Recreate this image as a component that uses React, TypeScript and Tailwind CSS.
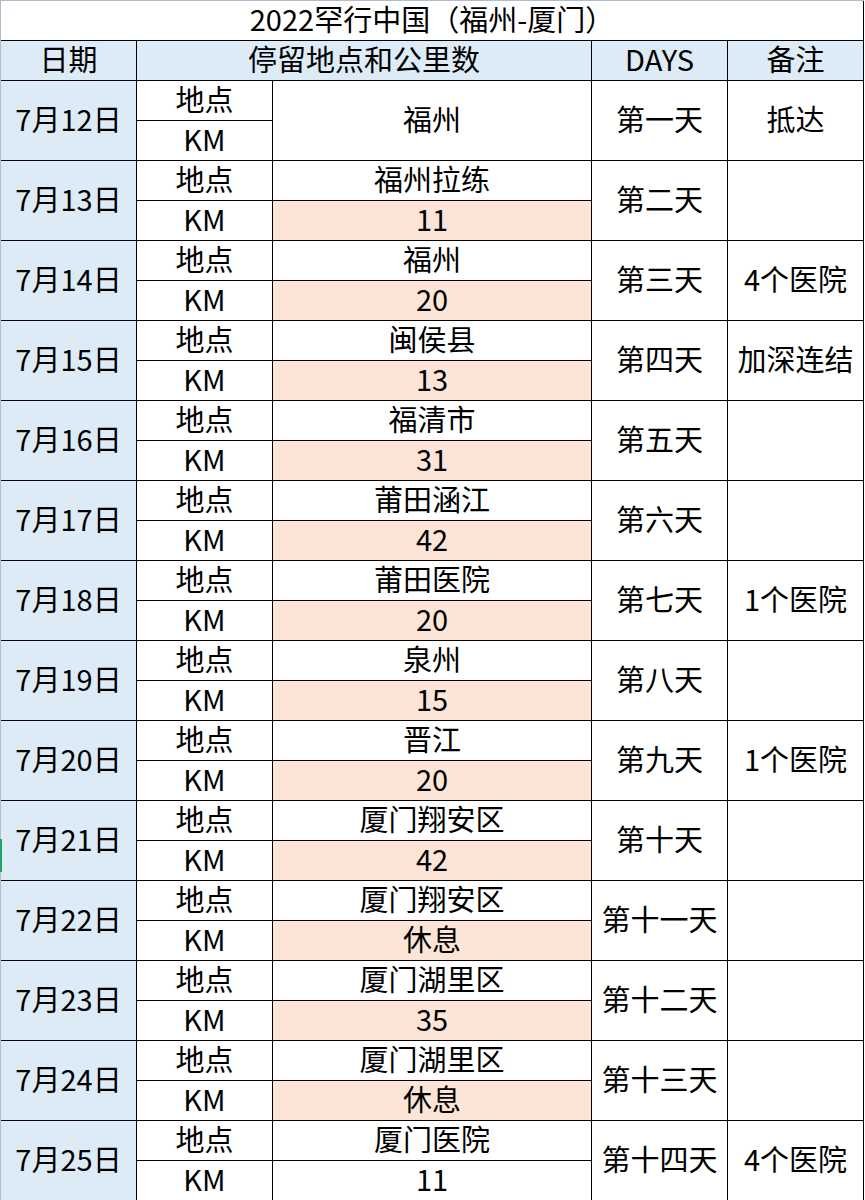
import React from "react";

type Row = { date: string; place: string; km: string; day: string; note: string };

const rows: Row[] = [
  { date: "7月12日", place: "福州", km: "", day: "第一天", note: "抵达" },
  { date: "7月13日", place: "福州拉练", km: "11", day: "第二天", note: "" },
  { date: "7月14日", place: "福州", km: "20", day: "第三天", note: "4个医院" },
  { date: "7月15日", place: "闽侯县", km: "13", day: "第四天", note: "加深连结" },
  { date: "7月16日", place: "福清市", km: "31", day: "第五天", note: "" },
  { date: "7月17日", place: "莆田涵江", km: "42", day: "第六天", note: "" },
  { date: "7月18日", place: "莆田医院", km: "20", day: "第七天", note: "1个医院" },
  { date: "7月19日", place: "泉州", km: "15", day: "第八天", note: "" },
  { date: "7月20日", place: "晋江", km: "20", day: "第九天", note: "1个医院" },
  { date: "7月21日", place: "厦门翔安区", km: "42", day: "第十天", note: "" },
  { date: "7月22日", place: "厦门翔安区", km: "休息", day: "第十一天", note: "" },
  { date: "7月23日", place: "厦门湖里区", km: "35", day: "第十二天", note: "" },
  { date: "7月24日", place: "厦门湖里区", km: "休息", day: "第十三天", note: "" },
  { date: "7月25日", place: "厦门医院", km: "11", day: "第十四天", note: "4个医院" },
];

const cell = "flex items-center justify-center pb-1 border-r border-b border-black whitespace-nowrap";

export default function App() {
  return (
    <div
      className="w-[865px] h-[1200px] overflow-hidden bg-white text-black text-[29px] leading-none relative"
      style={{ fontFamily: '"Microsoft YaHei", "Noto Sans CJK SC", "Noto Sans", sans-serif' }}
    >
      <div className="absolute left-0 top-[839px] w-[2px] h-[33px] bg-[#21a366]" />
      <div className="w-[864px] border-l border-t border-[#b1bbcf] grid grid-cols-[136px_136px_319px_136px_136px] auto-rows-[40px]">
        <div className={`${cell} col-span-5`}>2022罕行中国（福州-厦门）</div>
        <div className={`${cell} bg-[#ddebf7]`}>日期</div>
        <div className={`${cell} bg-[#ddebf7] col-span-2`}>停留地点和公里数</div>
        <div className={`${cell} bg-[#ddebf7]`}>DAYS</div>
        <div className={`${cell} bg-[#ddebf7]`}>备注</div>
        {rows.map((r, i) => {
          const first = i === 0;
          const last = i === rows.length - 1;
          return (
            <React.Fragment key={r.date}>
              <div className={`${cell} row-span-2 bg-[#ddebf7]`}>{r.date}</div>
              <div className={cell}>地点</div>
              {first ? (
                <div className={`${cell} row-span-2`}>{r.place}</div>
              ) : (
                <div className={cell}>{r.place}</div>
              )}
              <div className={`${cell} row-span-2`}>{r.day}</div>
              <div className={`${cell} row-span-2`}>{r.note}</div>
              <div className={cell}>KM</div>
              {!first && (
                <div className={`${cell} ${last ? "bg-white" : "bg-[#fce4d6]"}`}>{r.km}</div>
              )}
            </React.Fragment>
          );
        })}
      </div>
    </div>
  );
}
